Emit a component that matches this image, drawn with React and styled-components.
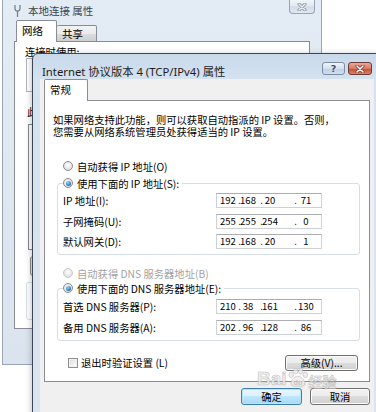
/** Windows 7 "Internet 协议版本 4 (TCP/IPv4) 属性" dialog over "本地连接 属性" */

import styled, { createGlobalStyle } from "styled-components";

const GlobalStyle = createGlobalStyle`
  html, body {
    margin: 0;
    padding: 0;
    background: #ffffff;
  }
  body {
    font-family: "Noto Sans CJK SC", "Noto Sans", sans-serif;
    font-size: 10.3px;
    color: #000;
  }
`;

const Desktop = styled.div`
  position: relative;
  width: 376px;
  height: 412px;
  overflow: hidden;
  background: #fff;
`;

/* ---------- back window ---------- */

const BackWindow = styled.div`
  box-sizing: border-box;
  width: 320px;
  height: 365px;
  margin-left: 2px;
  border: 1px solid #98a5b5;
  border-top: none;
  background: linear-gradient(180deg, #e3ebf4 0%, #dbe4ee 100%);
  display: flex;
  flex-direction: column;
`;

const BackTitleBar = styled.div`
  height: 20px;
  flex-shrink: 0;
  display: flex;
  align-items: center;
  gap: 7px;
  padding-left: 11px;
`;

const BackTitle = styled.span`
  font-size: 10.5px;
  color: #3d434b;
`;

const CaptionButton = styled.div`
  box-sizing: border-box;
  align-self: flex-start;
  width: ${(p) => p.$w}px;
  height: ${(p) => p.$h}px;
  display: flex;
  align-items: center;
  justify-content: center;
  border: 1px solid ${(p) => p.$border};
  border-top: ${(p) => (p.$flat ? "none" : `1px solid ${p.$border}`)};
  border-radius: ${(p) => (p.$flat ? "0 0 4px 4px" : "3px")};
  background: ${(p) => p.$bg};
  margin-left: ${(p) => p.$ml || 0};
  margin-right: ${(p) => p.$mr || 0}px;
  color: #3a4e66;
  font-family: "DejaVu Sans", sans-serif;
  font-size: 9.5px;
  font-weight: bold;
  text-shadow: 0 0 2px #fff;
`;

const TabStrip = styled.div`
  display: flex;
  align-items: flex-end;
  height: 22px;
  flex-shrink: 0;
  padding-left: ${(p) => p.$indent}px;
  margin-bottom: -1px;
  position: relative;
  z-index: 1;
`;

const Tab = styled.div`
  box-sizing: border-box;
  width: ${(p) => p.$w}px;
  height: ${(p) => (p.$active ? 22 : 17)}px;
  padding: ${(p) => (p.$active ? 3 : 1)}px 0 0 ${(p) => p.$pad}px;
  border: 1px solid #898c95;
  border-bottom: ${(p) => (p.$active ? "none" : "1px solid #898c95")};
  border-radius: 2px 2px 0 0;
  background: ${(p) =>
    p.$active
      ? "#fff"
      : "linear-gradient(180deg, #f3f3f3 0%, #ebebeb 50%, #dddddd 50%, #cfcfcf 100%)"};
  font-size: 10.5px;
  line-height: 14px;
  white-space: nowrap;

  & + & {
    border-left: none;
  }
`;

const BackPanel = styled.div`
  box-sizing: border-box;
  width: 296px;
  height: 288px;
  margin-left: 11px;
  padding: 4px 0 0 10px;
  border: 1px solid #898c95;
  background: #fff;
  display: flex;
  flex-direction: column;
  align-items: flex-start;
`;

const BackLabel = styled.div`
  margin: ${(p) => p.$mt || 0}px 0 0 ${(p) => p.$ml || 0}px;
  line-height: 12px;
  white-space: nowrap;
`;

const BackBox = styled.div`
  box-sizing: border-box;
  width: ${(p) => p.$w}px;
  height: ${(p) => p.$h}px;
  margin: ${(p) => p.$mt}px 0 0 ${(p) => p.$ml}px;
  border: 1px solid ${(p) => p.$border || "#b0b5bd"};
  border-radius: ${(p) => p.$radius || 0}px;
  background: ${(p) => p.$bg || "#fff"};
`;

/* ---------- front window ---------- */

const ForeWindow = styled.div`
  position: absolute;
  left: 32px;
  top: 53px;
  box-sizing: border-box;
  width: 350px;
  height: 380px;
  border: 1px solid #3b4757;
  border-radius: 6px 6px 0 0;
  background: linear-gradient(180deg, #c8d9eb 0px, #d5e2ef 26px, #dbe5f0 100%);
  box-shadow: -1px 1px 6px rgba(0, 0, 0, 0.22);
  display: flex;
  flex-direction: column;
`;

const ForeTitleBar = styled.div`
  box-sizing: border-box;
  height: 25px;
  flex-shrink: 0;
  display: flex;
  align-items: center;
  padding: 8px 0 0 9px;
`;

const ForeTitle = styled.span`
  font-family: "Noto Sans", "Noto Sans CJK SC", sans-serif;
  font-size: 11.3px;
  color: #1c1c1c;
  white-space: nowrap;
`;

const Client = styled.div`
  flex: 1;
  margin: 0 7px;
  padding: 0 4px;
  background: #f0f0f0;
  display: flex;
  flex-direction: column;
`;

const ForePanel = styled.div`
  box-sizing: border-box;
  width: 326px;
  height: 282px;
  padding-left: 8px;
  border: 1px solid #898c95;
  background: #fff;
  display: flex;
  flex-direction: column;
  align-items: flex-start;
`;

const Intro = styled.p`
  margin: 13px 0 0;
  line-height: 12px;
  white-space: nowrap;
`;

const OptionRow = styled.div`
  height: 14px;
  margin: ${(p) => p.$mt}px 0 0 10px;
  display: flex;
  align-items: center;
  gap: 4px;
  white-space: nowrap;
  color: ${(p) => (p.$disabled ? "#a3a3a3" : "#000")};
`;

const RadioMark = styled.span`
  box-sizing: border-box;
  width: 10px;
  height: 10px;
  border-radius: 50%;
  border: 1px solid ${(p) => (p.$disabled ? "#c9c9c9" : "#8a8a8a")};
  background: radial-gradient(circle at 50% 40%, #ffffff 0%, #e6e6e6 60%, #d2d2d2 100%);
  display: inline-flex;
  align-items: center;
  justify-content: center;

  &::after {
    content: "";
    display: ${(p) => (p.$checked ? "block" : "none")};
    width: 5px;
    height: 5px;
    border-radius: 50%;
    background: radial-gradient(circle at 40% 35%, #9bd8f8 0%, #3a86c0 55%, #14446e 100%);
  }
`;

const Group = styled.fieldset`
  box-sizing: border-box;
  width: 303px;
  margin: ${(p) => p.$mt}px 0 0 4px;
  padding: ${(p) => p.$pt}px 5px 5px;
  border: 1px solid #d5dfe5;
  border-radius: 3px;
  display: flex;
  flex-direction: column;
  gap: 5.5px;
`;

const Legend = styled.legend`
  height: 14px;
  padding: 0 3px 0 0;
  display: flex;
  align-items: center;
  gap: 4px;
  white-space: nowrap;
`;

const FieldRow = styled.div`
  height: 15px;
  display: flex;
  align-items: center;
`;

const FieldLabel = styled.span`
  width: 153px;
  flex-shrink: 0;
  white-space: nowrap;
`;

const IpBox = styled.div`
  box-sizing: border-box;
  width: 106px;
  height: 15px;
  border: 1px solid #cdd2d9;
  border-top-color: #abadb3;
  background: #fff;
  display: grid;
  grid-template-columns: 22px 2px 14px 8px 14px 20px 18px;
  align-items: center;
  font-size: 9.5px;
  line-height: 13px;
`;

const IpNum = styled.span`
  display: flex;
  justify-content: center;
  white-space: nowrap;
`;

const IpDot = styled.span`
  display: flex;
  justify-content: flex-end;
`;

const BottomRow = styled.div`
  align-self: stretch;
  height: 16px;
  margin-top: 14px;
  display: flex;
  align-items: center;
`;

const CheckMark = styled.span`
  box-sizing: border-box;
  width: 10px;
  height: 10px;
  margin: 0 3px 0 15px;
  border: 1px solid #8e8f8f;
  background: linear-gradient(135deg, #d9d9d9 0%, #f4f4f4 70%, #ffffff 100%);
  box-shadow: inset 0 0 0 1px #f2f2f2;
`;

const Button = styled.div`
  box-sizing: border-box;
  width: ${(p) => p.$w}px;
  height: ${(p) => p.$h || 17}px;
  margin-left: ${(p) => p.$ml || 0};
  margin-right: ${(p) => p.$mr || 0}px;
  display: flex;
  align-items: center;
  justify-content: center;
  border: 1px solid ${(p) => (p.$default ? "#3c7fb1" : "#707070")};
  border-radius: 3px;
  background: ${(p) =>
    p.$default
      ? "linear-gradient(180deg, #eaf6fd 0%, #d9f0fc 50%, #bee6fd 50%, #a7d9f5 100%)"
      : "linear-gradient(180deg, #f2f2f2 0%, #ebebeb 50%, #dddddd 50%, #cfcfcf 100%)"};
  box-shadow: inset 0 0 0 1px ${(p) => (p.$default ? "#b7e3fa" : "#fbfbfb")};
  white-space: nowrap;
`;

const Footer = styled.div`
  margin-top: 6px;
  display: flex;
  justify-content: flex-end;
  gap: 8px;
`;

const Watermark = styled.div`
  position: absolute;
  left: 257px;
  top: 368px;
  display: flex;
  align-items: flex-end;
  pointer-events: none;
  opacity: 0.8;
`;

const WaterText = styled.span`
  font-family: ${(p) => (p.$cjk ? '"Noto Sans CJK SC"' : '"Liberation Sans"')}, sans-serif;
  font-size: ${(p) => p.$size}px;
  font-weight: bold;
  line-height: 1;
  color: #ececec;
  -webkit-text-stroke: 0.6px #b4b4b4;
`;

function AdapterIcon() {
  return (
    <svg width="7" height="13" viewBox="0 0 7 13">
      <path d="M1 1v3.5a2.5 2.5 0 0 0 5 0V1" fill="none" stroke="#6f7b89" strokeWidth="1.2" />
      <path d="M3.5 7v6" stroke="#6f7b89" strokeWidth="1.2" />
    </svg>
  );
}

function CloseGlyph({ color, outline }) {
  return (
    <svg width="10" height="8" viewBox="0 0 10 8">
      <path d="M2 1l6 6M8 1L2 7" stroke={outline} strokeWidth="3" strokeLinecap="round" />
      <path d="M2 1l6 6M8 1L2 7" stroke={color} strokeWidth="1.6" strokeLinecap="round" />
    </svg>
  );
}

function Paw() {
  return (
    <svg width="22" height="20" viewBox="0 0 24 22">
      <g fill="#ececec" stroke="#b4b4b4" strokeWidth="0.8">
        <ellipse cx="4.5" cy="7.5" rx="2.4" ry="3" />
        <ellipse cx="9.5" cy="3.5" rx="2.4" ry="3" />
        <ellipse cx="15" cy="3.5" rx="2.4" ry="3" />
        <ellipse cx="20" cy="7.5" rx="2.4" ry="3" />
        <path d="M12 9C8 9 4 14 4.5 17.5 5 20.5 8 20.5 12 20c4 .5 7 .5 7.5-2.5C20 14 16 9 12 9z" />
      </g>
      <text x="12" y="18.5" textAnchor="middle" fontSize="8" fontWeight="bold" fill="#b8b8b8" fontFamily="Liberation Sans">
        du
      </text>
    </svg>
  );
}

function Radio({ checked, disabled }) {
  return <RadioMark $checked={checked} $disabled={disabled} />;
}

function IpField({ value }) {
  const parts = value.split(".");
  return (
    <IpBox>
      {parts.map((n, i) => [
        i > 0 && <IpDot key={"d" + i}>.</IpDot>,
        <IpNum key={"n" + i}>{n}</IpNum>,
      ])}
    </IpBox>
  );
}

const ipRows = [
  { label: "IP 地址(I):", value: "192.168.20.71" },
  { label: "子网掩码(U):", value: "255.255.254.0" },
  { label: "默认网关(D):", value: "192.168.20.1" },
];

const dnsRows = [
  { label: "首选 DNS 服务器(P):", value: "210.38.161.130" },
  { label: "备用 DNS 服务器(A):", value: "202.96.128.86" },
];

export default function App() {
  return (
    <Desktop>
      <GlobalStyle />

      <BackWindow>
        <BackTitleBar>
          <AdapterIcon />
          <BackTitle>本地连接 属性</BackTitle>
          <CaptionButton
            $w={26}
            $h={14}
            $flat
            $ml="auto"
            $mr={6}
            $border="#97a4b4"
            $bg="linear-gradient(180deg, #f1f5f9 0%, #e1e8f0 50%, #d4dde8 50%, #dfe7f0 100%)"
          >
            <CloseGlyph color="#e9edf2" outline="#7d8896" />
          </CaptionButton>
        </BackTitleBar>
        <TabStrip $indent={13}>
          <Tab $active $w={41} $pad={5}>网络</Tab>
          <Tab $w={40} $pad={5}>共享</Tab>
        </TabStrip>
        <BackPanel>
          <BackLabel>连接时使用:</BackLabel>
          <BackBox $w={272} $h={34} $mt={0} $ml={1} />
          <BackLabel $mt={14} $ml={2}>此连接使用下列项目(O):</BackLabel>
          <BackBox $w={268} $h={126} $mt={6} $ml={3} $border="#828790" />
          <BackBox $w={70} $h={20} $mt={6} $ml={5} $radius={3} $border="#8a8a8a" $bg="#e8e8e8" />
          <BackBox $w={272} $h={38} $mt={6} $ml={1} $radius={3} $border="#d5dfe5" />
        </BackPanel>
      </BackWindow>

      <ForeWindow>
        <ForeTitleBar>
          <ForeTitle>Internet 协议版本 4 (TCP/IPv4) 属性</ForeTitle>
          <CaptionButton
            $w={23}
            $h={13}
            $ml="auto"
            $border="#7c8da2"
            $bg="linear-gradient(180deg, #eef4fb 0%, #d3e0ef 50%, #bdd0e7 50%, #cfdff1 100%)"
          >
            ?
          </CaptionButton>
          <CaptionButton
            $w={24}
            $h={13}
            $ml="3px"
            $mr={9}
            $border="#6b3b37"
            $bg="linear-gradient(180deg, #eaa898 0%, #d67a67 50%, #c2492f 50%, #dc8262 100%)"
          >
            <CloseGlyph color="#ffffff" outline="#7a2a20" />
          </CaptionButton>
        </ForeTitleBar>

        <Client>
          <TabStrip $indent={0}>
            <Tab $active $w={44} $pad={5}>常规</Tab>
          </TabStrip>
          <ForePanel>
            <Intro>
              如果网络支持此功能，则可以获取自动指派的 IP 设置。否则，
              <br />
              您需要从网络系统管理员处获得适当的 IP 设置。
            </Intro>

            <OptionRow $mt={21}>
              <Radio />
              自动获得 IP 地址(O)
            </OptionRow>
            <Group $mt={3} $pt={3}>
              <Legend>
                <Radio checked />
                使用下面的 IP 地址(S):
              </Legend>
              {ipRows.map((row) => (
                <FieldRow key={row.label}>
                  <FieldLabel>{row.label}</FieldLabel>
                  <IpField value={row.value} />
                </FieldRow>
              ))}
            </Group>

            <OptionRow $mt={11} $disabled>
              <Radio disabled />
              自动获得 DNS 服务器地址(B)
            </OptionRow>
            <Group $mt={1} $pt={4}>
              <Legend>
                <Radio checked />
                使用下面的 DNS 服务器地址(E):
              </Legend>
              {dnsRows.map((row) => (
                <FieldRow key={row.label}>
                  <FieldLabel>{row.label}</FieldLabel>
                  <IpField value={row.value} />
                </FieldRow>
              ))}
            </Group>

            <BottomRow>
              <CheckMark />
              退出时验证设置 (L)
              <Button $w={73} $h={16} $ml="auto" $mr={11}>高级(V)...</Button>
            </BottomRow>
          </ForePanel>

          <Footer>
            <Button $w={61} $default>确定</Button>
            <Button $w={60}>取消</Button>
          </Footer>
        </Client>
      </ForeWindow>

      <Watermark>
        <WaterText $size={19}>Bai</WaterText>
        <Paw />
        <WaterText $size={14} $cjk>经验</WaterText>
      </Watermark>
    </Desktop>
  );
}
